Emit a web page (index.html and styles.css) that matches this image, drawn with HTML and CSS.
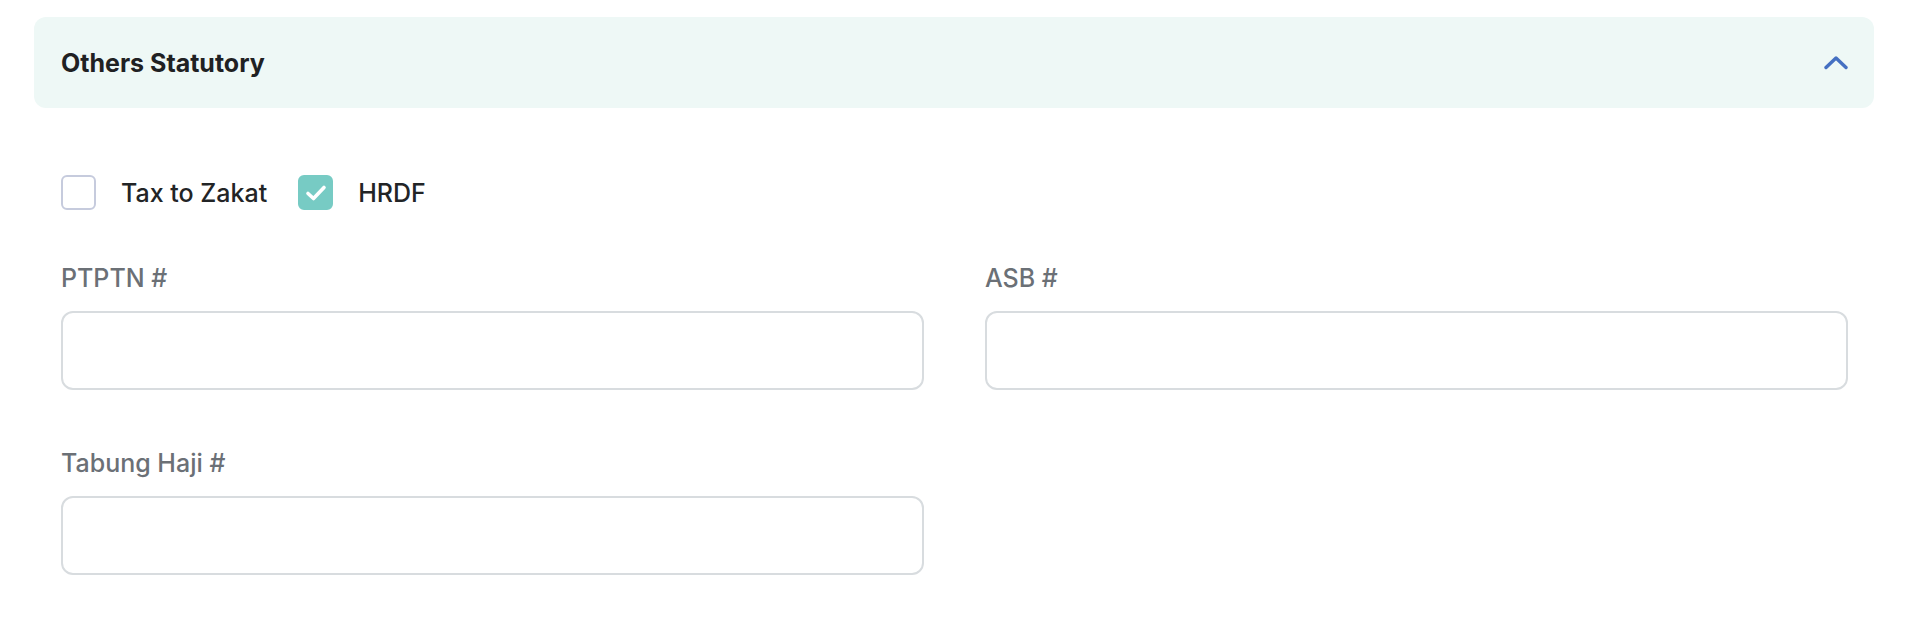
FILE: index.html
```html
<!DOCTYPE html>
<html lang="en">
<head>
<meta charset="utf-8">
<title>Others Statutory</title>
<link rel="stylesheet" href="styles.css">
</head>
<body>
<section class="panel">
  <div class="panel-header">
    <h2 class="panel-title">Others Statutory</h2>
    <svg class="chevron" width="24" height="15" viewBox="0 0 24 15" aria-hidden="true">
      <polyline points="2,12.5 12,3 22,12.5" fill="none" stroke="#4570c2" stroke-width="3.4" stroke-linecap="round" stroke-linejoin="round"/>
    </svg>
  </div>
  <div class="panel-body">
    <div class="checks">
      <label class="check">
        <span class="box"></span>
        <span class="check-label">Tax to Zakat</span>
      </label>
      <label class="check">
        <span class="box checked">
          <svg width="22" height="18" viewBox="0 0 22 18" aria-hidden="true">
            <polyline points="3,9.5 8.5,14.5 19,3.5" fill="none" stroke="#fff" stroke-width="3.6" stroke-linecap="round" stroke-linejoin="round"/>
          </svg>
        </span>
        <span class="check-label">HRDF</span>
      </label>
    </div>
    <div class="fields">
      <div class="field">
        <div class="field-label">PTPTN #</div>
        <div class="input"></div>
      </div>
      <div class="field">
        <div class="field-label">ASB #</div>
        <div class="input"></div>
      </div>
      <div class="field">
        <div class="field-label">Tabung Haji #</div>
        <div class="input"></div>
      </div>
    </div>
  </div>
</section>
</body>
</html>
```
FILE: styles.css
```css
html, body {
  margin: 0;
  padding: 0;
  background: #ffffff;
}
body {
  font-family: Inter, "Noto Sans", "Liberation Sans", sans-serif;
  color: #222426;
}
.panel {
  margin: 17px 32px 0 34px;
}
.panel-header {
  height: 91px;
  box-sizing: border-box;
  padding: 0 26px 0 27px;
  background: #eef8f6;
  border-radius: 12px;
  display: flex;
  align-items: center;
  justify-content: space-between;
}
.panel-title {
  margin: 0;
  font-size: 25px;
  font-weight: 700;
  color: #1f2123;
  line-height: 32px;
}
.chevron {
  display: block;
}
.panel-body {
  padding: 0 26px 0 27px;
}
.checks {
  display: flex;
  align-items: center;
  gap: 31px;
  margin-top: 67px;
}
.check {
  display: flex;
  align-items: center;
  gap: 25px;
}
.box {
  width: 35px;
  height: 35px;
  box-sizing: border-box;
  border: 2px solid #c6cbdd;
  border-radius: 6px;
  display: flex;
  align-items: center;
  justify-content: center;
}
.box.checked {
  background: #77cbc4;
  border-color: #77cbc4;
}
.check-label {
  font-size: 25px;
  font-weight: 500;
  color: #222426;
  line-height: 32px;
}
.fields {
  display: grid;
  grid-template-columns: 1fr 1fr;
  column-gap: 61px;
  row-gap: 57px;
  margin-top: 52px;
}
.field-label {
  font-size: 25px;
  font-weight: 500;
  color: #6b7076;
  line-height: 32px;
  margin-bottom: 17px;
}
.input {
  height: 79px;
  box-sizing: border-box;
  border: 2.5px solid #d8dcdf;
  border-radius: 12px;
  background: #fff;
}
```
